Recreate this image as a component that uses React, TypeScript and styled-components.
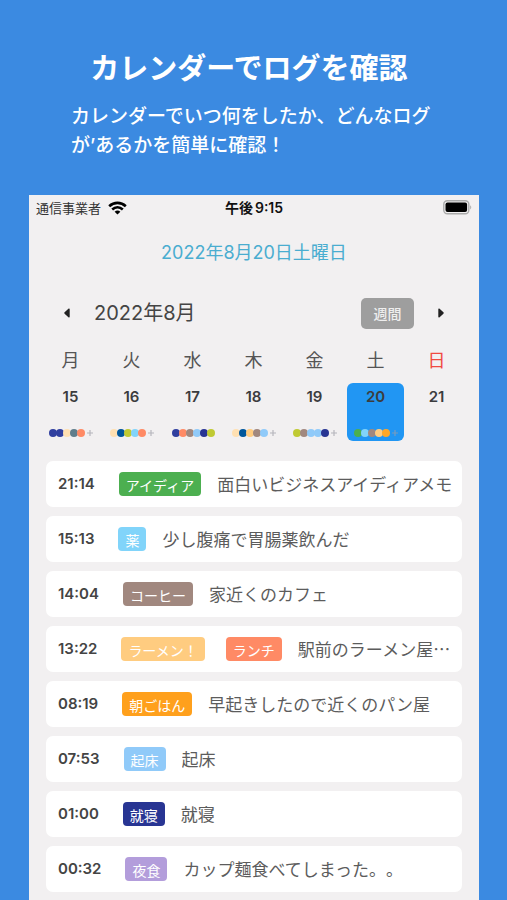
import React from "react";
import styled, { createGlobalStyle } from "styled-components";

const cjk = `"Noto Sans CJK JP"`;
const mixed = `Inter, ${cjk}, sans-serif`;

const GlobalStyle = createGlobalStyle`
  * { box-sizing: border-box; }
  body {
    margin: 0;
    background: #3b8ae1;
    font-family: ${cjk}, sans-serif;
    text-spacing-trim: space-all;
  }
  h1, h2, p, ul { margin: 0; padding: 0; }
  button { border: 0; padding: 0; background: none; font: inherit; color: inherit; cursor: pointer; }
`;

const Page = styled.div`
  display: flex;
  flex-direction: column;
  min-height: 100vh;
  background: #3b8ae1;
`;

const Intro = styled.header`
  padding: 45px 62px 35px 71px;
  color: #fff;
`;

const Headline = styled.h1`
  padding-right: 18px;
  font-size: 29px;
  font-weight: 700;
  line-height: 42px;
  text-align: center;
  white-space: nowrap;
`;

const Lead = styled.p`
  margin-top: 13px;
  font-family: ${cjk}, sans-serif;
  font-size: 19px;
  font-weight: 500;
  line-height: 29px;
`;

const Apostrophe = styled.span`
  font-family: Inter, sans-serif;
`;

const Screen = styled.main`
  flex: 1;
  display: flex;
  flex-direction: column;
  margin: 0 28px 0 29px;
  padding-bottom: 8px;
  background: #f2f0f1;
`;

const StatusBar = styled.div`
  display: grid;
  grid-template-columns: 1fr auto 1fr;
  align-items: center;
  height: 25px;
  padding: 0 7px;
  font-family: ${mixed};
  font-size: 13px;
  line-height: 20px;
`;

const Carrier = styled.div`
  display: flex;
  align-items: center;
  gap: 7px;
  color: #333;
`;

const Clock = styled.time`
  display: flex;
  gap: 2px;
  color: #111;
  font-size: 14px;
  font-weight: 600;
`;

const BatteryIcon = styled.svg`
  justify-self: end;
`;

const DateTitle = styled.h2`
  margin-top: 19px;
  color: #4aadd0;
  font-family: ${mixed};
  font-size: 18px;
  font-weight: 400;
  line-height: 27px;
  text-align: center;
`;

const MonthBar = styled.div`
  display: flex;
  align-items: center;
  margin-top: 31px;
  padding: 0 29px;
`;

const Arrow = styled.button`
  display: flex;
  align-items: center;
  justify-content: center;
  width: 18px;
  height: 32px;
`;

const MonthName = styled.span`
  flex: 1;
  padding-left: 18px;
  color: #444;
  font-family: ${mixed};
  font-size: 20px;
  line-height: 30px;
`;

const RangeButton = styled.button`
  width: 53px;
  height: 31px;
  margin-right: 18px;
  border-radius: 5px;
  background: #9e9e9e;
  color: #eee;
  font-size: 14px;
  font-weight: 500;
`;

const Week = styled.div`
  display: grid;
  grid-template-columns: repeat(7, 1fr);
  margin-top: 15px;
  padding: 0 12px 0 11px;
`;

const Weekday = styled.div<{ $sunday: boolean }>`
  height: 39px;
  color: ${(p) => (p.$sunday ? "#f04a41" : "#555")};
  font-size: 18px;
  line-height: 31px;
  text-align: center;
`;

const Day = styled.button<{ $selected: boolean }>`
  display: flex;
  flex-direction: column;
  align-items: center;
  justify-content: space-between;
  height: 58px;
  margin: 0 2px;
  padding: 4px 0;
  border-radius: 6px;
  background: ${(p) => (p.$selected ? "#2196f3" : "transparent")};
`;

const DayNumber = styled.span`
  color: #3c3c3e;
  font-family: ${mixed};
  font-size: 15px;
  font-weight: 600;
  line-height: 20px;
`;

const Dots = styled.span`
  display: flex;
  align-items: center;
  height: 8px;
`;

const Dot = styled.i<{ $color: string }>`
  width: 8px;
  height: 8px;
  margin-right: -1px;
  border-radius: 50%;
  background: ${(p) => p.$color};
`;

const MoreIcon = styled.svg`
  margin-left: 3px;
`;

const LogList = styled.ul`
  display: flex;
  flex-direction: column;
  gap: 9px;
  margin-top: 20px;
  padding: 0 17px;
  list-style: none;
`;

const LogItem = styled.li`
  display: flex;
  align-items: center;
  height: 46px;
  padding: 0 6px 0 12px;
  border-radius: 7px;
  background: #fff;
`;

const LogTime = styled.time`
  flex: none;
  margin-right: 24px;
  color: #444;
  font-family: ${mixed};
  font-size: 15px;
  font-weight: 600;
  line-height: 20px;
`;

const Tags = styled.div`
  display: flex;
  flex: none;
  gap: 21px;
`;

const Tag = styled.span<{ $color: string }>`
  height: 24px;
  padding: 2px 7px 0;
  border-radius: 4px;
  background: ${(p) => p.$color};
  color: #fff;
  font-size: 14px;
  line-height: 22px;
`;

const LogText = styled.span`
  min-width: 0;
  margin-left: 16px;
  overflow: hidden;
  color: #5c5c5c;
  font-size: 17px;
  line-height: 26px;
  text-overflow: ellipsis;
  white-space: nowrap;
`;

type DayData = { name: string; date: number; dots: string[]; more?: boolean };

const days: DayData[] = [
  { name: "月", date: 15, dots: ["#303f9f", "#303f9f", "#ffe0b2", "#607d8b", "#ff8a65"], more: true },
  { name: "火", date: 16, dots: ["#ffe0b2", "#01579b", "#c0ca33", "#81d4fa", "#ff8a65"], more: true },
  { name: "水", date: 17, dots: ["#303f9f", "#ff8a65", "#a1887f", "#90caf9", "#283593", "#c0ca33"] },
  { name: "木", date: 18, dots: ["#ffe0b2", "#01579b", "#ffcc80", "#a1887f", "#90caf9"], more: true },
  { name: "金", date: 19, dots: ["#c0ca33", "#a1887f", "#90caf9", "#90caf9", "#283593"], more: true },
  { name: "土", date: 20, dots: ["#4caf50", "#81d4fa", "#a1887f", "#ffcc80", "#ffa726"], more: true },
  { name: "日", date: 21, dots: [] },
];

type Log = { time: string; tags: [string, string][]; text: string };

const logs: Log[] = [
  { time: "21:14", tags: [["アイディア", "#4caf50"]], text: "面白いビジネスアイディアメモ" },
  { time: "15:13", tags: [["薬", "#81d4fa"]], text: "少し腹痛で胃腸薬飲んだ" },
  { time: "14:04", tags: [["コーヒー", "#a1887f"]], text: "家近くのカフェ" },
  { time: "13:22", tags: [["ラーメン！", "#ffcc80"], ["ランチ", "#ff8a65"]], text: "駅前のラーメン屋…" },
  { time: "08:19", tags: [["朝ごはん", "#ffa01c"]], text: "早起きしたので近くのパン屋" },
  { time: "07:53", tags: [["起床", "#90caf9"]], text: "起床" },
  { time: "01:00", tags: [["就寝", "#283593"]], text: "就寝" },
  { time: "00:32", tags: [["夜食", "#b39ddb"]], text: "カップ麺食べてしまった。。" },
];

function Wifi() {
  return (
    <svg width="19" height="14" viewBox="0 0 19 14" aria-hidden="true">
      <g fill="none" stroke="#000" strokeWidth="2.6">
        <path d="M1.2 5.2C6 .7 13 .7 17.8 5.2" />
        <path d="M4.2 8.5c3.2-2.9 7.4-2.9 10.6 0" />
      </g>
      <path d="M6.6 10.7c1.8-1.6 4-1.6 5.8 0L9.5 13.6z" fill="#000" />
    </svg>
  );
}

function Battery() {
  return (
    <BatteryIcon width="29" height="15" viewBox="0 0 29 15" aria-hidden="true">
      <rect x=".8" y=".8" width="25" height="13" rx="3.5" fill="none" stroke="#aaa" strokeWidth="1.4" />
      <rect x="2.5" y="2.5" width="21.6" height="9.6" rx="2" fill="#000" />
      <path d="M27.2 5.2c1.4.8 1.4 3.4 0 4.2z" fill="#aaa" />
    </BatteryIcon>
  );
}

function Triangle({ right = false }: { right?: boolean }) {
  return (
    <svg width="6" height="10" viewBox="0 0 6 10" aria-hidden="true">
      <path
        d={
          right
            ? "M.3 1.2C.3.3 1 .2 1.6.8L5.4 4.3q.7.7 0 1.4L1.6 9.2C1 9.8.3 9.7.3 8.8z"
            : "M5.7 1.2C5.7.3 5 .2 4.4.8L.6 4.3q-.7.7 0 1.4l3.8 3.5c.6.6 1.3.5 1.3-.4z"
        }
        fill="#222"
      />
    </svg>
  );
}

export default function App() {
  return (
    <Page lang="ja">
      <GlobalStyle />
      <Intro>
        <Headline>カレンダーでログを確認</Headline>
        <Lead>
          カレンダーでいつ何をしたか、どんなログ
          <br />が<Apostrophe>’</Apostrophe>あるかを簡単に確認！
        </Lead>
      </Intro>
      <Screen>
        <StatusBar>
          <Carrier>
            通信事業者
            <Wifi />
          </Carrier>
          <Clock>
            <span>午後</span>
            <span>9:15</span>
          </Clock>
          <Battery />
        </StatusBar>
        <DateTitle>2022年8月20日土曜日</DateTitle>
        <MonthBar>
          <Arrow aria-label="前の週">
            <Triangle />
          </Arrow>
          <MonthName>2022年8月</MonthName>
          <RangeButton>週間</RangeButton>
          <Arrow aria-label="次の週">
            <Triangle right />
          </Arrow>
        </MonthBar>
        <Week>
          {days.map((d) => (
            <Weekday key={d.name} $sunday={d.name === "日"}>
              {d.name}
            </Weekday>
          ))}
          {days.map((d) => (
            <Day key={d.date} $selected={d.date === 20} aria-pressed={d.date === 20}>
              <DayNumber>{d.date}</DayNumber>
              <Dots>
                {d.dots.map((c, i) => (
                  <Dot key={i} $color={c} />
                ))}
                {d.more && (
                  <MoreIcon width="6" height="6" viewBox="0 0 6 6" aria-hidden="true">
                    <path d="M3 0v6M0 3h6" stroke="#9e9ea6" strokeOpacity=".7" strokeWidth="1.2" />
                  </MoreIcon>
                )}
              </Dots>
            </Day>
          ))}
        </Week>
        <LogList>
          {logs.map((log) => (
            <LogItem key={log.time}>
              <LogTime>{log.time}</LogTime>
              <Tags>
                {log.tags.map(([label, color]) => (
                  <Tag key={label} $color={color}>
                    {label}
                  </Tag>
                ))}
              </Tags>
              <LogText>{log.text}</LogText>
            </LogItem>
          ))}
        </LogList>
      </Screen>
    </Page>
  );
}
